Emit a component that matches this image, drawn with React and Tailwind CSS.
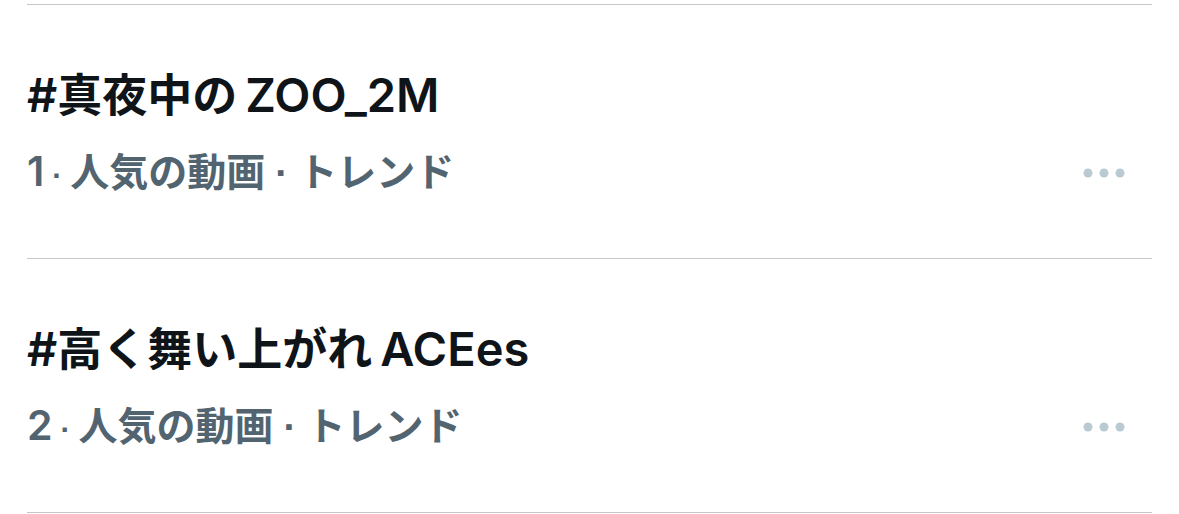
const trends = [
  { rank: 1, tag: "真夜中の", name: "ZOO_2M" },
  { rank: 2, tag: "高く舞い上がれ", name: "ACEes" },
];

const TrendItem = ({ rank, tag, name }) => {
  return (
    <li className="border-b border-[#c4c6c8] pt-[60px] pb-[57px]">
      <h2 className="flex h-[60px] items-baseline text-[45px] leading-[60px] font-semibold text-[#0f1419]">
        <span className="text-[47px] font-[560]">#</span>
        <span>{tag}</span>
        <span className="ml-2 text-[47px] font-[560]">{name}</span>
      </h2>
      <div className="mt-5 flex h-[56px] items-center justify-between pr-[27px]">
        <p className="flex items-baseline gap-2.5 text-[39px] leading-[56px] font-semibold text-[#536471]">
          <span className="flex items-baseline gap-2">
            <span className="text-[41px]">{rank}</span>
            <span className="font-['Liberation_Sans',sans-serif] text-[30px]">·</span>
            <span>人気の動画</span>
          </span>
          <span className="font-['Liberation_Sans',sans-serif]">·</span>
          <span>トレンド</span>
        </p>
        <button type="button" aria-label="その他">
          <svg width="42" height="10" viewBox="0 0 42 10" fill="#b9cad3">
            <circle cx="5" cy="5" r="4.5" />
            <circle cx="21" cy="5" r="4.5" />
            <circle cx="37" cy="5" r="4.5" />
          </svg>
        </button>
      </div>
    </li>
  );
};

const App = () => {
  return (
    <main className="bg-white px-[27px] pt-1 font-['Inter','Noto_Sans_CJK_JP',sans-serif]">
      <ul className="border-t border-[#c4c6c8]">
        {trends.map((trend) => (
          <TrendItem key={trend.rank} {...trend} />
        ))}
      </ul>
    </main>
  );
};

export default App;
